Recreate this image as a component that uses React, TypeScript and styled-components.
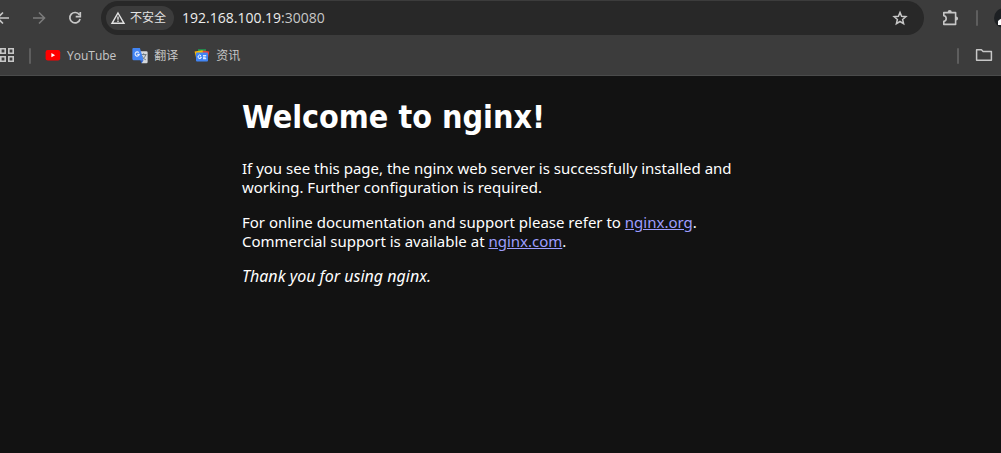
import React from "react";
import styled, { createGlobalStyle } from "styled-components";

const GlobalStyle = createGlobalStyle`
  *, *::before, *::after { box-sizing: border-box; }
  html, body, #root { height: 100%; }
  body {
    margin: 0;
    background: #121212;
    overflow: hidden;
  }
`;

const uiFont = `"Open Sans", "Noto Sans CJK SC", sans-serif`;

const Browser = styled.div`
  min-height: 100%;
  display: flex;
  flex-direction: column;
  overflow: hidden;
`;

const Chrome = styled.header`
  background: #3c3c3c;
  border-bottom: 1px solid #4a4b4b;
  font-family: ${uiFont};
  color: #c7c7c7;
`;

const Toolbar = styled.div`
  display: flex;
  align-items: center;
  height: 36px;
  margin: 0 -13px 0 -15px;
`;

const IconButton = styled.button<{ $dim?: boolean; $narrow?: boolean }>`
  display: flex;
  align-items: center;
  justify-content: center;
  flex: none;
  width: ${(p) => (p.$narrow ? "24px" : "36px")};
  height: 34px;
  padding: 0;
  border: 0;
  background: none;
  color: ${(p) => (p.$dim ? "#7b7b7b" : "#c7c7c7")};
`;

const AddressBar = styled.form`
  flex: 1;
  display: flex;
  align-items: center;
  height: 34px;
  margin: 0 8px;
  padding: 0 12px 0 5px;
  border-radius: 17px;
  background: #282828;
`;

const SecurityChip = styled.button`
  display: flex;
  align-items: center;
  gap: 4px;
  height: 24px;
  padding: 0 8px 0 4px;
  border: 0;
  border-radius: 12px;
  background: #3c3c3c;
  color: #e3e3e3;
  font: 12px/16px ${uiFont};
  white-space: nowrap;
`;

const AddressField = styled.label`
  position: relative;
  flex: 1;
  margin-left: 8px;
  height: 24px;
  font: 14px/24px ${uiFont};
`;

const AddressInput = styled.input`
  display: block;
  width: 100%;
  height: 24px;
  padding: 0;
  border: 0;
  outline: 0;
  background: none;
  color: transparent;
  font: inherit;
`;

const AddressText = styled.span`
  position: absolute;
  inset: 0;
  color: #c7c7c7;
  pointer-events: none;
`;

const Host = styled.span`
  color: #ececec;
`;

const Divider = styled.span<{ $before?: number; $after?: number }>`
  flex: none;
  width: 2px;
  height: 16px;
  margin-left: ${(p) => p.$before ?? 8}px;
  margin-right: ${(p) => p.$after ?? 8}px;
  border-radius: 1px;
  background: #5e5e5e;
`;

const ProfileButton = styled.button`
  flex: none;
  width: 20px;
  height: 20px;
  margin-left: 8px;
  padding: 0;
  border: 0;
  border-radius: 10px;
  background: #1d2023;
  overflow: hidden;
`;

const BookmarkBar = styled.nav`
  display: flex;
  align-items: center;
  height: 39px;
  margin-left: -5px;
`;

const Bookmark = styled.a`
  display: flex;
  align-items: center;
  gap: 6px;
  flex: none;
  height: 28px;
  padding: 0 8px;
  color: #c7c7c7;
  font-size: 12px;
  line-height: 16px;
  text-decoration: none;
`;

const Spacer = styled.span`
  flex: 1;
`;

const Page = styled.main`
  padding-left: 43px;
  color: #ffffff;
  font: 15px/19px "Noto Sans", sans-serif;
`;

const Article = styled.article`
  max-width: 560px;
  margin: 0 auto;
`;

const Title = styled.h1`
  margin: 0;
  padding: 22px 0;
  font-family: "DejaVu Sans Condensed", sans-serif;
  font-size: 32px;
  line-height: 39px;
  font-weight: 700;
`;

const Paragraph = styled.p`
  margin: 0 0 16px;
  max-width: 520px;
`;

const Closing = styled(Paragraph)`
  font-size: 16px;
`;

const TextLink = styled.a`
  color: #9e9eff;
`;

const BackIcon = () => (
  <svg width="16" height="16" viewBox="0 0 16 16" fill="none" stroke="currentColor" strokeWidth="1.6" aria-hidden="true">
    <path d="M14 8H3M8 2.5 2.5 8 8 13.5" />
  </svg>
);

const ForwardIcon = () => (
  <svg width="16" height="16" viewBox="0 0 16 16" fill="none" stroke="currentColor" strokeWidth="1.6" aria-hidden="true">
    <path d="M2 8h11M8 2.5 13.5 8 8 13.5" />
  </svg>
);

const ReloadIcon = () => (
  <svg width="16" height="16" viewBox="0 0 16 16" fill="none" stroke="currentColor" strokeWidth="1.7" aria-hidden="true">
    <path d="M12.4 4.8A5.2 5.2 0 1 0 13.1 9M13.3 2v4.6H8.7" />
  </svg>
);

const WarningIcon = () => (
  <svg width="16" height="16" viewBox="0 0 16 16" fill="none" stroke="currentColor" strokeWidth="1.4" aria-hidden="true">
    <path d="M8 3 14 13.3H2Z" strokeLinejoin="miter" />
    <path d="M8 6.4v3.4M8 10.6v1.3" />
  </svg>
);

const StarIcon = () => (
  <svg width="16" height="16" viewBox="0 0 16 16" fill="none" stroke="currentColor" strokeWidth="1.5" aria-hidden="true">
    <path d="m8 2.4 1.6 3.9 4.3.4-3.3 2.8 1 4.2L8 11.5l-3.6 2.2 1-4.2-3.3-2.8 4.3-.4Z" />
  </svg>
);

const PuzzleIcon = () => (
  <svg width="18" height="18" viewBox="0 0 18 18" aria-hidden="true">
    <path
      d="M2.8 3.6H14.6V15.4H2.8V12.4C6 12 6 7.200 2.800 6.800Z"
      fill="none"
      stroke="currentColor"
      strokeWidth="1.6"
      strokeLinejoin="round"
    />
    <path d="M6.6 3.2a2.1 2.1 0 0 1 4.2 0ZM15 7.4a2.1 2.1 0 0 1 0 4.2Z" fill="currentColor" />
  </svg>
);

const AvatarIcon = () => (
  <svg width="20" height="20" viewBox="0 0 20 20" aria-hidden="true">
    <path d="M4 13q3-3 7-3t5 3l2 4H4Z" fill="#fff" />
  </svg>
);

const AppsIcon = () => (
  <svg width="16" height="16" viewBox="0 0 16 16" fill="none" stroke="currentColor" strokeWidth="1.6" aria-hidden="true">
    <path d="M1.8.8h4.4v4.4H1.8ZM9.8.8h4.4v4.4H9.8ZM1.8 8.8h4.4v4.4H1.8ZM9.8 8.8h4.4v4.4H9.8Z" />
  </svg>
);

const YouTubeIcon = () => (
  <svg width="16" height="16" viewBox="0 0 16 16" aria-hidden="true">
    <rect x="0.6" y="2" width="14.6" height="10.400" rx="2.2" fill="#f00" />
    <path d="M6.4 5.1v4.2L10.1 7.200Z" fill="#fff" />
  </svg>
);

const TranslateIcon = () => (
  <svg width="16" height="16" viewBox="0 0 16 16" aria-hidden="true">
    <path d="M6 3.2h8.4q1.2 0 1.2 1.2V14q0 1.2-1.2 1.2H9.6Z" fill="#d5d8dc" />
    <path d="M8.9 6.6h5.6M11.6 5.4v1.2M13.7 6.6c-.5 2.3-2 3.8-3.6 4.8M10 8.1c.8 1.8 2.2 3 3.8 3.7" fill="none" stroke="#69757c" />
    <path d="M1.4 0h6.5l3.6 12.2H1.4Q.4 12.2.4 11.1V1.1Q.4 0 1.4 0Z" fill="#4285f4" />
    <path d="M8 12.2h3.5l-1.9 3Z" fill="#2457c5" />
    <path d="M6.8 4.6a2.1 2.1 0 1 0 .5 1.8h-2" fill="none" stroke="#e6efff" strokeWidth="1.1" />
  </svg>
);

const NewsIcon = () => (
  <svg width="16" height="16" viewBox="0 0 16 16" aria-hidden="true">
    <path d="M4 1.2h8v7H4Z" fill="#1e9c50" />
    <path d="m.6 3.6 8-1.400 1.600 6-8 2Z" fill="#fbbc04" />
    <path d="m9 2.6 6.300 1-1.400 7L8 9.200Z" fill="#ea4335" />
    <rect x="2" y="4.4" width="12" height="9" rx="1" fill="#4285f4" />
    <path d="M7 7.700a1.700 1.700 0 1 0 .4 1.500H5.900M9 7.700h3.200M9 9.200h2.600M9 10.700h3.200" fill="none" stroke="#fff" />
  </svg>
);

const FolderIcon = () => (
  <svg width="18" height="16" viewBox="0 0 18 16" fill="none" stroke="currentColor" strokeWidth="1.5" aria-hidden="true">
    <path d="M1.600 1.800h4.800l1.700 1.700h8.300v8.800H1.600Z" strokeLinejoin="round" />
  </svg>
);

export default function App() {
  return (
    <Browser>
      <GlobalStyle />
      <Chrome>
        <Toolbar>
          <IconButton aria-label="Back"><BackIcon /></IconButton>
          <IconButton aria-label="Forward" $dim><ForwardIcon /></IconButton>
          <IconButton aria-label="Reload"><ReloadIcon /></IconButton>
          <AddressBar onSubmit={(e) => e.preventDefault()}>
            <SecurityChip type="button">
              <WarningIcon />
              不安全
            </SecurityChip>
            <AddressField>
              <AddressInput aria-label="Address" defaultValue="192.168.100.19:30080" />
              <AddressText aria-hidden="true"><Host>192.168.100.19</Host>:30080</AddressText>
            </AddressField>
            <IconButton type="button" aria-label="Bookmark this page" $narrow><StarIcon /></IconButton>
          </AddressBar>
          <IconButton aria-label="Extensions"><PuzzleIcon /></IconButton>
          <Divider />
          <ProfileButton aria-label="Profile"><AvatarIcon /></ProfileButton>
        </Toolbar>
        <BookmarkBar aria-label="Bookmarks">
          <IconButton aria-label="Apps" $narrow><AppsIcon /></IconButton>
          <Divider $before={10} $after={6} />
          <Bookmark href="#youtube"><YouTubeIcon />YouTube</Bookmark>
          <Bookmark href="#translate"><TranslateIcon />翻译</Bookmark>
          <Bookmark href="#news"><NewsIcon />资讯</Bookmark>
          <Spacer />
          <Divider />
          <Bookmark href="#all" aria-label="All bookmarks"><FolderIcon /></Bookmark>
        </BookmarkBar>
      </Chrome>
      <Page>
        <Article>
          <Title>Welcome to nginx!</Title>
          <Paragraph>
            If you see this page, the nginx web server is successfully installed and working. Further
            configuration is required.
          </Paragraph>
          <Paragraph>
            For online documentation and support please refer to <TextLink href="#org">nginx.org</TextLink>.
            <br />
            Commercial support is available at <TextLink href="#com">nginx.com</TextLink>.
          </Paragraph>
          <Closing>
            <em>Thank you for using nginx.</em>
          </Closing>
        </Article>
      </Page>
    </Browser>
  );
}
